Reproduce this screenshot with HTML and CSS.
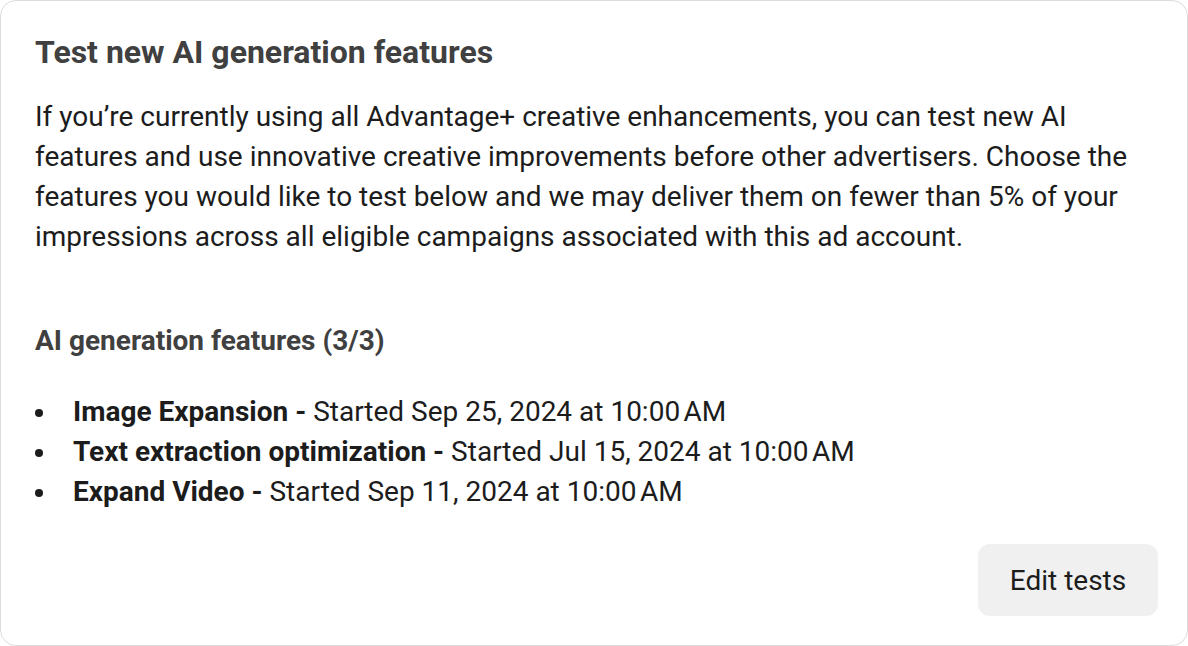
FILE: index.html
```
<!DOCTYPE html>
<html lang="en">
<head>
  <meta charset="UTF-8">
  <title>Test new AI generation features</title>
  <link rel="stylesheet" href="styles.css">
</head>
<body>

<div class="card">
  <h2 class="title">Test new AI generation features</h2>
  <p class="intro">If you’re currently using all Advantage+ creative enhancements, you can test new AI features and use innovative creative improvements before other advertisers. Choose the features you would like to test below and we may deliver them on fewer than 5% of your impressions across all eligible campaigns associated with this ad account.</p>

  <h3 class="subtitle">AI generation features (3/3)</h3>
  <ul class="features">
    <li><b>Image Expansion -</b>&nbsp;Started Sep 25, 2024 at 10:00&#8239;AM</li>
    <li><b>Text extraction optimization -</b>&nbsp;Started Jul 15, 2024 at 10:00&#8239;AM</li>
    <li><b>Expand Video -</b>&nbsp;Started Sep 11, 2024 at 10:00&#8239;AM</li>
  </ul>

  <div class="actions">
    <button class="btn">Edit tests</button>
  </div>
</div>

</body>
</html>
```

FILE: styles.css
```
html, body { margin: 0; background: #fff; }
body { font-family: Roboto, "Liberation Sans", Arial, sans-serif; color: #1c1c1c; }
.card { box-sizing: border-box; width: 1188px; height: 646px; border: 1px solid #dcdcdc; border-radius: 16px; padding: 31px 29px 29px 34px; display: flex; flex-direction: column; }
.title { margin: 0; font-size: 32px; line-height: 40px; font-weight: 700; color: #404040; }
.intro { margin: 25px 0 0 0; font-size: 28px; line-height: 40px; }
.subtitle { margin: 64px 0 0 0; font-size: 28px; line-height: 40px; font-weight: 700; color: #404040; }
.features { list-style: none; margin: 31px 0 0 0; padding: 0; font-size: 28px; line-height: 40px; }
.features li { display: flex; align-items: center; }
.features li::before { content: ""; width: 8px; height: 8px; border-radius: 50%; background: #1c1c1c; margin: 2px 30px 0 0; flex: none; }
.features b { font-weight: 700; }
.actions { margin-top: auto; display: flex; justify-content: flex-end; }
.btn { width: 180px; height: 72px; border: none; border-radius: 12px; background: #f0f0f0; color: #1c1c1c; font-family: inherit; font-size: 28px; cursor: pointer; }
```
